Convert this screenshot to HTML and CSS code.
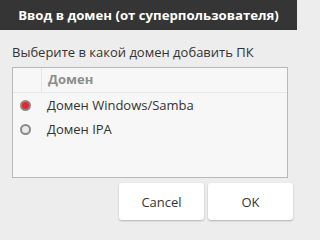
FILE: index.html
```html
<!DOCTYPE html>
<html lang="ru">
<head>
<meta charset="utf-8">
<link rel="stylesheet" href="styles.css">
</head>
<body>
<div class="dialog">
  <div class="titlebar">Ввод в домен (от суперпользователя)</div>
  <div class="content">
    <div class="label">Выберите в какой домен добавить ПК</div>
    <div class="list">
      <div class="header">
        <div class="hcol-radio"></div>
        <div class="hcol-name">Домен</div>
      </div>
      <div class="row">
        <div class="col-radio"><span class="radio checked"></span></div>
        <div class="col-name">Домен Windows/Samba</div>
      </div>
      <div class="row">
        <div class="col-radio"><span class="radio"></span></div>
        <div class="col-name">Домен IPA</div>
      </div>
    </div>
  </div>
  <div class="buttons">
    <button class="btn">Cancel</button>
    <button class="btn">OK</button>
  </div>
</div>
</body>
</html>
```
FILE: styles.css
```css
html, body {
  margin: 0;
  padding: 0;
}
body {
  width: 297px;
  height: 223px;
  background: #ededed;
  font-family: "Open Sans", "Liberation Sans", sans-serif;
  overflow: hidden;
}
.dialog {
  display: flex;
  flex-direction: column;
  height: 223px;
}
.titlebar {
  height: 30px;
  line-height: 30px;
  background: #353535;
  color: #ffffff;
  font-weight: bold;
  font-size: 13.2px;
  text-align: center;
}
.content {
  padding: 13px 9px 0 12px;
}
.label {
  font-size: 13px;
  line-height: 18px;
  color: #333333;
  margin-bottom: 6px;
}
.list {
  height: 109px;
  border: 1px solid #b9b9b9;
  background: #f7f7f7;
}
.header {
  display: flex;
  height: 24px;
  border-bottom: 1px solid #e6e6e6;
}
.hcol-radio {
  width: 28px;
  border-right: 1px solid #e6e6e6;
}
.hcol-name {
  padding-left: 6px;
  font-size: 13px;
  font-weight: bold;
  color: #8d8d8d;
  line-height: 22px;
}
.row {
  display: flex;
  align-items: center;
  height: 24px;
}
.col-radio {
  width: 28px;
  padding-left: 7px;
  box-sizing: border-box;
  display: flex;
  align-items: center;
}
.col-name {
  padding-left: 6px;
  font-size: 13px;
  color: #333333;
}
.radio {
  width: 11px;
  height: 11px;
  box-sizing: border-box;
  border-radius: 50%;
  border: 2px solid #8a8a8a;
  background: #eaeaea;
}
.radio.checked {
  background: #e8262b;
}
.buttons {
  display: flex;
  justify-content: flex-end;
  gap: 4px;
  padding: 5px 4px 0 0;
}
.btn {
  width: 85px;
  height: 37px;
  border: none;
  border-radius: 3px;
  background: #ffffff;
  box-shadow: 0 1px 2px rgba(0, 0, 0, 0.25);
  font-family: "Open Sans", "Liberation Sans", sans-serif;
  font-size: 13px;
  color: #333333;
  padding: 0;
}
```
